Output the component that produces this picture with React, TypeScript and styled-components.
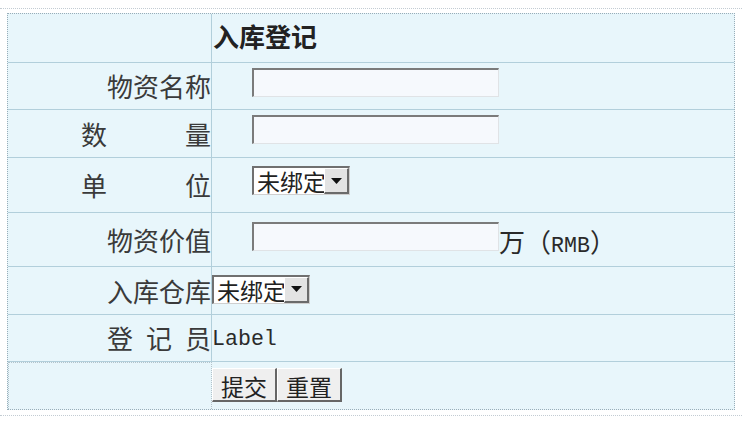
import React from 'react';
import styled, { createGlobalStyle } from 'styled-components';

const GlobalStyle = createGlobalStyle`
    html, body {
        margin: 0;
        padding: 0;
        background: #ffffff;
    }
    body {
        font-family: "Noto Sans CJK SC", "Noto Sans", sans-serif;
        color: #333333;
    }
`;

const Frame = styled.div`
    margin-top: 8px;
    padding: 4px 7px 5px 7px;
    border-top: 1px dotted #c3ccd3;
    border-bottom: 1px dotted #c3ccd3;
`;

const Table = styled.div`
    width: 728px;
    box-sizing: border-box;
    border: 1px dotted #98adb8;
    background: #e8f6fb;
`;

const Row = styled.div<{ $h: number; $last?: boolean }>`
    display: grid;
    grid-template-columns: 204px 1fr;
    height: ${p => p.$h}px;
    box-sizing: border-box;
    border-bottom: ${p => (p.$last ? 'none' : '1px solid #b2cfdb')};
`;

const LabelCell = styled.div<{ $empty?: boolean }>`
    box-sizing: border-box;
    display: flex;
    align-items: center;
    justify-content: flex-end;
    border-right: 1px solid #b2cfdb;
    font-size: 26px;
    line-height: 1;
    color: #3a3a3a;
    ${p => p.$empty && 'border: 1px dotted #b4c3cb; border-bottom: none;'}
`;

const Spread = styled.span<{ $gap: number }>`
    display: inline-flex;
    gap: ${p => p.$gap}px;
`;

const ValueCell = styled.div<{ $indent?: number }>`
    display: flex;
    align-items: center;
    padding-left: ${p => p.$indent ?? 0}px;
    min-width: 0;
`;

const Title = styled.h3`
    margin: 0 0 4px 1px;
    font-size: 26px;
    line-height: 1;
    font-weight: bold;
    color: #222222;
`;

const TextBox = styled.input<{ $lift?: number }>`
    box-sizing: border-box;
    width: 247px;
    height: 29px;
    margin: 0 0 ${p => p.$lift ?? 7}px 0;
    padding: 0 4px;
    border-style: solid;
    border-width: 2px 1px 1px 2px;
    border-color: #7b7b7b #e0e3e6 #e0e3e6 #7b7b7b;
    background: #f6f9fd;
    font-size: 20px;
    outline: none;
`;

const Dropdown = styled.div<{ $lift?: number }>`
    display: inline-flex;
    box-sizing: border-box;
    width: 98px;
    height: 29px;
    margin-bottom: ${p => p.$lift ?? 0}px;
    background: #ffffff;
    border-style: solid;
    border-width: 2px 1px 1px 2px;
    border-color: #707070 #cfcfcf #cfcfcf #707070;
`;

const DropSelect = styled.select`
    appearance: none;
    flex: 1;
    min-width: 0;
    height: 100%;
    margin: 0;
    padding: 0 0 0 3px;
    border: none;
    background: transparent;
    font-family: "Noto Sans CJK SC", sans-serif;
    font-size: 23px;
    line-height: 26px;
    color: #222222;
    outline: none;
`;

const DropArrow = styled.span`
    box-sizing: border-box;
    width: 25px;
    display: flex;
    align-items: center;
    justify-content: center;
    background: #e3e3e3;
    border-style: solid;
    border-width: 1px 2px 2px 1px;
    border-color: #ffffff #6b6b6b #6b6b6b #ffffff;
`;

const Unit = styled.span`
    align-self: flex-end;
    margin-bottom: 7px;
    font-size: 26px;
    line-height: 26px;
    color: #2a2a2a;
`;

const Latin = styled.span`
    font-family: "Liberation Mono", "DejaVu Sans Mono", monospace;
    font-size: 21.6px;
`;

const Clerk = styled.span`
    margin-top: 4px;
    font-family: "Liberation Mono", "DejaVu Sans Mono", monospace;
    font-size: 21.6px;
    line-height: 1;
    color: #2a2a2a;
`;

const Button = styled.button`
    box-sizing: border-box;
    width: 65px;
    height: 34px;
    margin: 0 0 2px 0;
    padding: 0;
    background: #efefef;
    border-style: solid;
    border-width: 1px 2px 2px 1px;
    border-color: #ffffff #666666 #666666 #ffffff;
    font-family: "Noto Sans CJK SC", sans-serif;
    font-size: 23px;
    color: #222222;
    cursor: pointer;
`;

const Select: React.FC<{ lift?: number }> = ({ lift }) => (
    <Dropdown $lift={lift}>
        <DropSelect defaultValue="none">
            <option value="none">未绑定</option>
        </DropSelect>
        <DropArrow>
            <svg width="11" height="6" viewBox="0 0 11 6">
                <path d="M0 0 H11 L5.5 6 Z" fill="#111" />
            </svg>
        </DropArrow>
    </Dropdown>
);

const App: React.FC = () => {
    return (
        <>
            <GlobalStyle />
            <Frame>
                <Table>
                    <Row $h={49}>
                        <LabelCell />
                        <ValueCell>
                            <Title>入库登记</Title>
                        </ValueCell>
                    </Row>
                    <Row $h={47}>
                        <LabelCell>物资名称</LabelCell>
                        <ValueCell $indent={40}>
                            <TextBox />
                        </ValueCell>
                    </Row>
                    <Row $h={48}>
                        <LabelCell>
                            <Spread $gap={78}><span>数</span><span>量</span></Spread>
                        </LabelCell>
                        <ValueCell $indent={40}>
                            <TextBox $lift={8} />
                        </ValueCell>
                    </Row>
                    <Row $h={55}>
                        <LabelCell>
                            <Spread $gap={78}><span>单</span><span>位</span></Spread>
                        </LabelCell>
                        <ValueCell $indent={40}>
                            <Select lift={9} />
                        </ValueCell>
                    </Row>
                    <Row $h={54}>
                        <LabelCell>物资价值</LabelCell>
                        <ValueCell $indent={40}>
                            <TextBox $lift={7} />
                            <Unit>万（<Latin>RMB</Latin>）</Unit>
                        </ValueCell>
                    </Row>
                    <Row $h={48}>
                        <LabelCell>入库仓库</LabelCell>
                        <ValueCell>
                            <Select lift={3} />
                        </ValueCell>
                    </Row>
                    <Row $h={47}>
                        <LabelCell>
                            <Spread $gap={13}><span>登</span><span>记</span><span>员</span></Spread>
                        </LabelCell>
                        <ValueCell>
                            <Clerk>Label</Clerk>
                        </ValueCell>
                    </Row>
                    <Row $h={47} $last>
                        <LabelCell $empty />
                        <ValueCell>
                            <Button type="submit">提交</Button>
                            <Button type="reset">重置</Button>
                        </ValueCell>
                    </Row>
                </Table>
            </Frame>
        </>
    );
};

export default App;
